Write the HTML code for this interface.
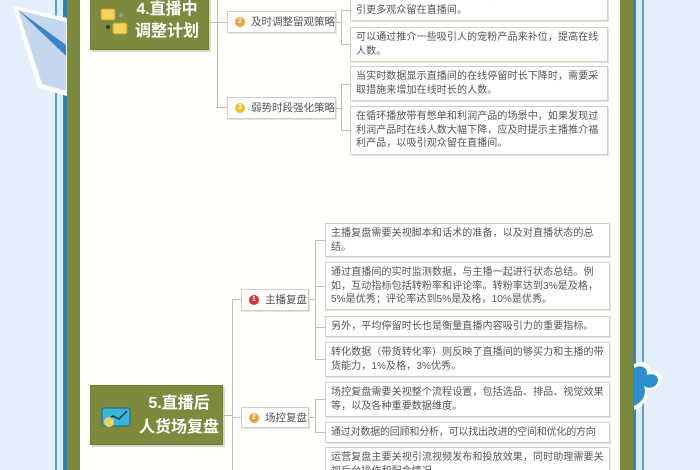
<!DOCTYPE html>
<html><head><meta charset="utf-8"><style>
*{margin:0;padding:0;box-sizing:border-box}
html,body{width:700px;height:470px;overflow:hidden}
body{background:#e3effa;position:relative;font-family:"Liberation Sans","Noto Sans CJK SC",sans-serif}
.a{position:absolute}
.box{position:absolute;background:#fff;border:1px solid #cfcfc8;box-shadow:1px 1px 0 #e4e4dc;color:#555;font-size:10px;line-height:13.5px;padding:3px 4px 3px 5px;letter-spacing:0.1px;overflow:hidden}
.sub{position:absolute;background:#fff;border:1px solid #cfcfc8;box-shadow:1px 1px 0 #e4e4dc;color:#555;font-size:10.5px;line-height:20px;padding-left:23px;white-space:nowrap}
.dot{position:absolute;left:7px;top:5px;width:10px;height:10px;border-radius:50%;color:#fff;font-size:7px;line-height:10px;text-align:center;font-weight:bold}
.node{position:absolute;background:#7b8a3d;border:1px solid #6e7c35;box-shadow:2px 2px 0 #d8d8cc;color:#fff;font-weight:bold;font-size:16px;text-align:center}
.ln{position:absolute;background:#bfbfb8}
</style></head><body>
<div class="a" style="left:55px;top:0;width:2px;height:470px;background:#5aa3c8"></div>
<div class="a" style="left:57px;top:0;width:6px;height:470px;background:#d8ecf8"></div>
<div class="a" style="left:63px;top:0;width:4px;height:470px;background:#2e86b8"></div>
<div class="a" style="left:67px;top:0;width:13px;height:470px;background:#7b8a3d"></div>
<div class="a" style="left:80px;top:0;width:540px;height:470px;background:#fffffb"></div>
<div class="a" style="left:620px;top:0;width:13px;height:470px;background:#7b8a3d"></div>
<div class="a" style="left:633px;top:0;width:3px;height:470px;background:#2e86b8"></div>
<div class="a" style="left:636px;top:0;width:6px;height:470px;background:#d8ecf8"></div>
<div class="a" style="left:642px;top:0;width:2px;height:470px;background:#5aa3c8"></div>
<svg class="a" style="left:0;top:0" width="70" height="100"><polygon points="13,6 67,18 67,96 38,88" fill="#fff"/><polygon points="18,10 66,22 66,91 42,84" fill="#c5d6ef"/><polygon points="18,10 66,45 66,56" fill="#3a85c8"/></svg>
<svg class="a" style="left:630px;top:358px" width="36" height="60"><path d="M4,6 C14,0 22,8 20,14 C30,10 36,20 28,28 C24,34 18,32 16,30 C20,40 14,48 4,52 Z" fill="#fff"/><path d="M4,10 C12,6 18,10 17,17 C26,14 31,21 26,27 C22,31 17,30 14,28 C17,38 12,44 4,48 Z" fill="#2a8fd0"/></svg>

<div class="node" style="left:90px;top:-6px;width:119px;height:56px"><div class="a" style="left:44px;top:4px;line-height:22px;font-size:16px">4.直播中<br>调整计划</div>
<svg class="a" style="left:8px;top:12px" width="32" height="30"><rect x="2" y="2" width="14" height="11" rx="2" fill="#f4d25a" stroke="#c9a030"/><rect x="14" y="16" width="14" height="11" rx="2" fill="#f4d25a" stroke="#c9a030"/><circle cx="9" cy="20" r="2" fill="#333"/><circle cx="22" cy="8" r="2" fill="#999"/></svg></div>
<div class="ln" style="left:209px;top:22px;width:18px;height:1px"></div>
<div class="ln" style="left:217px;top:0;width:1px;height:108px"></div>
<div class="ln" style="left:217px;top:107px;width:10px;height:1px"></div>
<div class="sub" style="left:227px;top:11px;width:109px;height:22px"><span class="dot" style="background:#f0a030">2</span>及时调整留观策略</div>
<div class="sub" style="left:227px;top:97px;width:109px;height:22px"><span class="dot" style="background:#f0c020">3</span>弱势时段强化策略</div>
<div class="ln" style="left:336px;top:22px;width:6px;height:1px"></div>
<div class="ln" style="left:341px;top:10px;width:1px;height:35px"></div>
<div class="ln" style="left:341px;top:10px;width:9px;height:1px"></div>
<div class="ln" style="left:341px;top:44px;width:9px;height:1px"></div>
<div class="ln" style="left:336px;top:108px;width:6px;height:1px"></div>
<div class="ln" style="left:341px;top:84px;width:1px;height:47px"></div>
<div class="ln" style="left:341px;top:84px;width:9px;height:1px"></div>
<div class="ln" style="left:341px;top:130px;width:9px;height:1px"></div>
<div class="box" style="left:350px;top:-14px;width:258px;height:35px">直播下降，需要及时提供福利，需要采取措施来吸<br>引更多观众留在直播间。</div>
<div class="box" style="left:350px;top:27px;width:258px;height:35px">可以通过推介一些吸引人的宠粉产品来补位，提高在线人数。</div>
<div class="box" style="left:350px;top:66px;width:258px;height:35px">当实时数据显示直播间的在线停留时长下降时，需要采取措施来增加在线时长的人数。</div>
<div class="box" style="left:350px;top:106px;width:258px;height:49px">在循环播放带有憋单和利润产品的场景中，如果发现过利润产品时在线人数大幅下降，应及时提示主播推介福利产品，以吸引观众留在直播间。</div>

<div class="node" style="left:90px;top:385px;width:133px;height:60px"><div class="a" style="left:44px;top:6px;line-height:24px;width:88px">5.直播后<br>人货场复盘</div>
<svg class="a" style="left:10px;top:21px" width="30" height="20"><rect x="1" y="1" width="28" height="18" rx="2" fill="#37b6d8" stroke="#2a6080"/><path d="M4,15 L12,9 L18,12 L26,4" stroke="#1a3a60" stroke-width="1.5" fill="none"/><circle cx="8" cy="15" r="5" fill="#f0d060"/></svg></div>
<div class="ln" style="left:223px;top:415px;width:10px;height:1px"></div>
<div class="ln" style="left:232px;top:299px;width:1px;height:171px"></div>
<div class="ln" style="left:232px;top:299px;width:9px;height:1px"></div>
<div class="ln" style="left:232px;top:417px;width:9px;height:1px"></div>
<div class="sub" style="left:241px;top:289px;width:68px;height:22px"><span class="dot" style="background:#e03030">1</span>主播复盘</div>
<div class="sub" style="left:241px;top:407px;width:68px;height:21px"><span class="dot" style="background:#f0a030">2</span>场控复盘</div>
<div class="ln" style="left:309px;top:299px;width:7px;height:1px"></div>
<div class="ln" style="left:315px;top:240px;width:1px;height:120px"></div>
<div class="ln" style="left:315px;top:240px;width:10px;height:1px"></div>
<div class="ln" style="left:315px;top:286px;width:10px;height:1px"></div>
<div class="ln" style="left:315px;top:327px;width:10px;height:1px"></div>
<div class="ln" style="left:315px;top:359px;width:10px;height:1px"></div>
<div class="ln" style="left:309px;top:417px;width:7px;height:1px"></div>
<div class="ln" style="left:315px;top:399px;width:1px;height:34px"></div>
<div class="ln" style="left:315px;top:399px;width:10px;height:1px"></div>
<div class="ln" style="left:315px;top:432px;width:10px;height:1px"></div>
<div class="box" style="left:325px;top:223px;width:285px;height:34px">主播复盘需要关视脚本和话术的准备，以及对直播状态的总结。</div>
<div class="box" style="left:325px;top:262px;width:285px;height:48px">通过直播间的实时监测数据，与主播一起进行状态总结。例如，互动指标包括转粉率和评论率。转粉率达到3%是及格，5%是优秀；评论率达到5%是及格，10%是优秀。</div>
<div class="box" style="left:325px;top:316px;width:285px;height:21px;white-space:nowrap">另外，平均停留时长也是衡量直播内容吸引力的重要指标。</div>
<div class="box" style="left:325px;top:342px;width:285px;height:35px">转化数据（带货转化率）则反映了直播间的够买力和主播的带货能力，1%及格，3%优秀。</div>
<div class="box" style="left:325px;top:382px;width:285px;height:35px">场控复盘需要关视整个流程设置，包括选品、排品、视觉效果等，以及各种重要数据维度。</div>
<div class="box" style="left:325px;top:422px;width:285px;height:21px;white-space:nowrap;letter-spacing:-0.2px">通过对数据的回顾和分析，可以找出改进的空间和优化的方向</div>
<div class="box" style="left:325px;top:447px;width:285px;height:35px">运营复盘主要关视引流视频发布和投放效果，同时助理需要关视后台操作和配合情况。</div>
</body></html>
